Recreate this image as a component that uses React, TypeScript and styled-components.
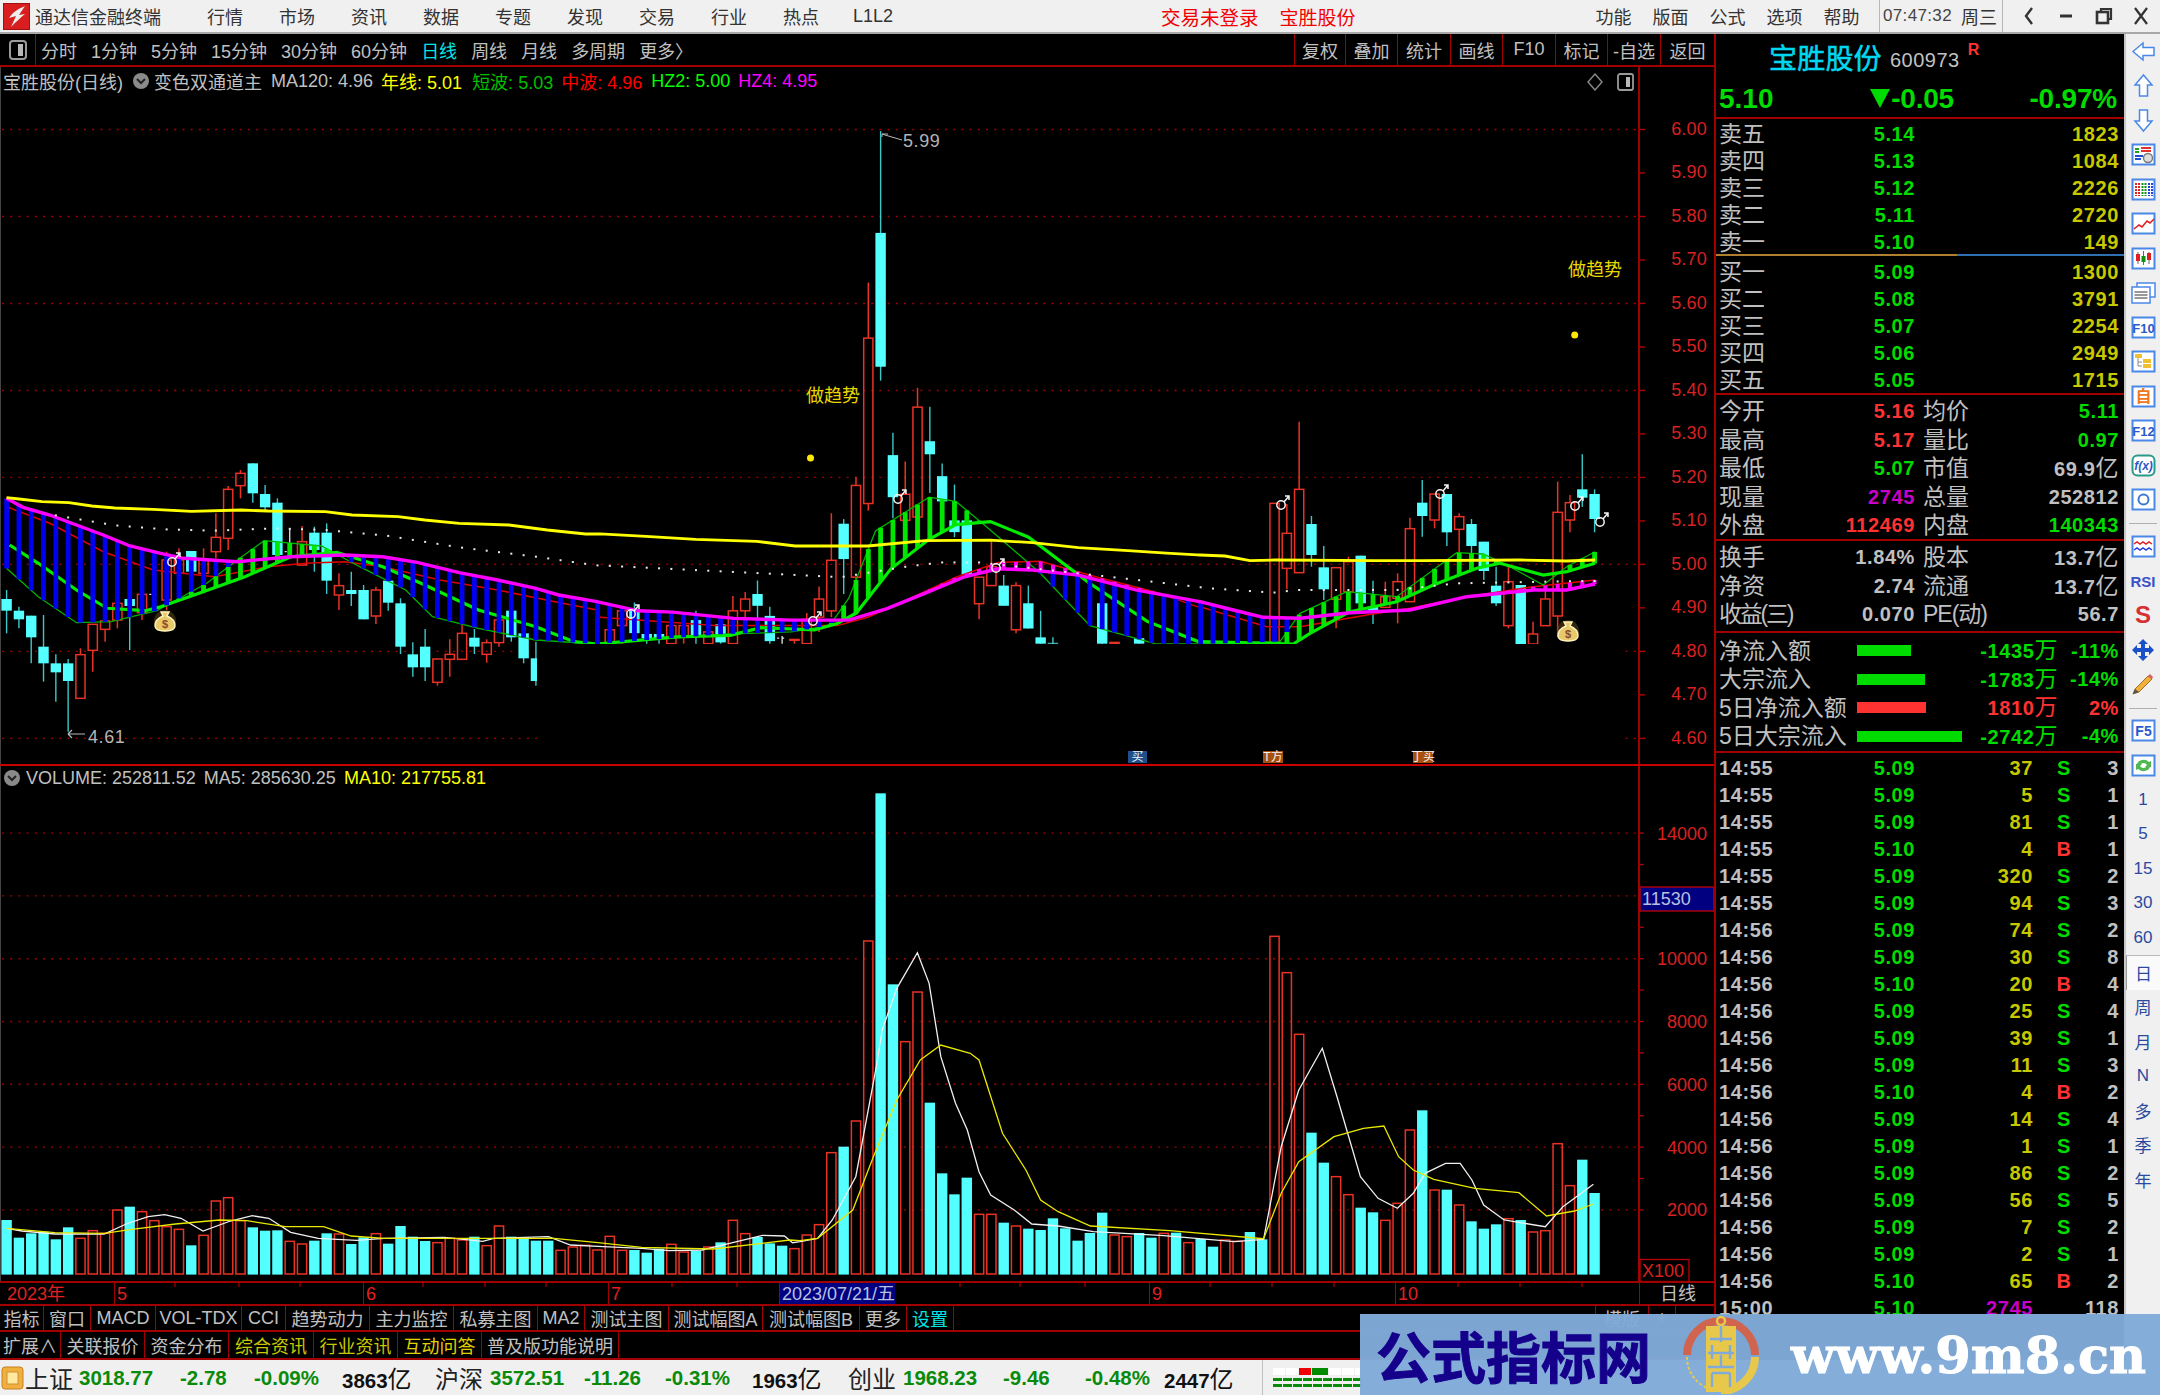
import React from 'react';
import styled, { createGlobalStyle } from 'styled-components';

const SANS = `"Liberation Sans","Noto Sans CJK SC",sans-serif`;
const LINE = '#a00000';
const GRAY = '#c0c0c0';
const GREEN = '#00dc00';
const YEL = '#c8c800';
const RED = '#ff3232';
const MAG = '#c800c8';
const CYAN_TXT = '#00e6e6';

const Global = createGlobalStyle`
  html, body { margin: 0; padding: 0; background: #000; }
  #root { width: 2160px; height: 1395px; overflow: hidden; }
  * { box-sizing: border-box; }
`;

const Page = styled.div`
  position: relative;
  width: 2160px;
  height: 1395px;
  display: flex;
  flex-direction: column;
  font-family: ${SANS};
  background: #000;
  overflow: hidden;
`;

/* ---------- title bar ---------- */
const TitleBar = styled.div`
  height: 34px;
  flex: none;
  display: flex;
  align-items: center;
  background: #f0f0f0;
  border-bottom: 2px solid #a8a8a8;
  color: #333;
  font-size: 18px;
`;
const AppName = styled.div`
  margin-left: 5px;
  width: 126px;
  margin-right: 28px;
  white-space: nowrap;
`;
const MenuCell = styled.div<{ $w: number }>`
  width: ${(p) => p.$w}px;
  text-align: center;
  white-space: nowrap;
`;
const Alert = styled.div<{ $ml: number; $size: number }>`
  margin-left: ${(p) => p.$ml}px;
  color: #f00000;
  font-size: ${(p) => p.$size}px;
  white-space: nowrap;
`;
const RightMenus = styled.div`
  margin-left: auto;
  display: flex;
  align-items: center;
  height: 100%;
`;
const Clock = styled.div`
  margin-left: 9px;
  width: 124px;
  height: 100%;
  border-left: 1px solid #b8b8b8;
  border-right: 1px solid #b8b8b8;
  display: flex;
  align-items: center;
  padding-left: 3px;
  font-size: 17px;
  letter-spacing: 0.35px;
  color: #444;
  white-space: nowrap;
`;
const ClockDay = styled.span`
  margin-left: 9px;
  font-size: 18px;
  letter-spacing: 0;
  color: #333;
`;
const WinButtons = styled.div`
  display: flex;
  padding-left: 7px;
  width: 157px;
`;
const WinBtn = styled.div`
  width: 37.5px;
  height: 24px;
  display: flex;
  align-items: center;
  justify-content: center;
`;

/* ---------- body ---------- */
const Body = styled.div`
  flex: none;
  height: 1326px;
  display: flex;
`;
const LeftCol = styled.div`
  width: 1714px;
  flex: none;
  display: flex;
  flex-direction: column;
`;
const Toolbar = styled.div`
  height: 33px;
  flex: none;
  display: flex;
  align-items: stretch;
  border-bottom: 2px solid ${LINE};
  color: ${GRAY};
  font-size: 18px;
`;
const ToolIconCell = styled.div`
  width: 36px;
  border-right: 1px solid ${LINE};
  display: flex;
  align-items: center;
  justify-content: center;
`;
const PeriodList = styled.div`
  display: flex;
  align-items: center;
  gap: 14px;
  padding-left: 5px;
`;
const Period = styled.span<{ $on?: boolean }>`
  color: ${(p) => (p.$on ? CYAN_TXT : GRAY)};
  white-space: nowrap;
`;
const ActionList = styled.div`
  margin-left: auto;
  display: flex;
`;
const Action = styled.div<{ $w: number }>`
  width: ${(p) => p.$w}px;
  border-left: 1px solid ${LINE};
  display: flex;
  align-items: center;
  justify-content: center;
  white-space: nowrap;
`;

const MainPane = styled.div`
  position: relative;
  height: 699px;
  flex: none;
  border-bottom: 2px solid #c80000;
`;
const VolPane = styled.div`
  position: relative;
  height: 517px;
  flex: none;
  border-bottom: 2px solid ${LINE};
`;
const ChartSvg = styled.svg`
  display: block;
  font-family: ${SANS};
`;
const Legend = styled.div<{ $top: number }>`
  position: absolute;
  left: 3px;
  top: ${(p) => p.$top}px;
  height: 22px;
  display: flex;
  align-items: center;
  font-size: 18px;
  color: ${GRAY};
  white-space: nowrap;
`;
const LegendTxt = styled.span<{ $c?: string; $ml?: number }>`
  color: ${(p) => p.$c || GRAY};
  margin-left: ${(p) => p.$ml ?? 0}px;
`;
const ChevronDot = styled.svg<{ $ml: number; $mr: number }>`
  margin: 0 ${(p) => p.$mr}px 0 ${(p) => p.$ml}px;
`;
const PaneIcons = styled.div`
  position: absolute;
  top: 6px;
  left: 1587px;
  display: flex;
  gap: 14px;
  align-items: center;
`;

const TimeAxis = styled.div`
  position: relative;
  height: 23px;
  flex: none;
  display: flex;
  border-bottom: 2px solid ${LINE};
  color: #e02020;
  font-size: 18px;
`;
const TimeSeg = styled.div<{ $w: number; $first?: boolean; $c?: string; $bg?: string; $center?: boolean }>`
  width: ${(p) => p.$w}px;
  flex: none;
  border-left: ${(p) => (p.$first ? 'none' : `1px solid ${LINE}`)};
  padding-left: ${(p) => (p.$first ? 7 : 2)}px;
  color: ${(p) => p.$c || '#e02020'};
  background: ${(p) => p.$bg || 'transparent'};
  text-align: ${(p) => (p.$center ? 'center' : 'left')};
  line-height: 22px;
  white-space: nowrap;
  overflow: hidden;
`;
const Ticks = styled.svg`
  position: absolute;
  left: 0;
  top: 0;
`;
const TabRow = styled.div<{ $h: number }>`
  height: ${(p) => p.$h}px;
  flex: none;
  display: flex;
  border-bottom: 2px solid ${LINE};
  font-size: 18px;
`;
const Tab = styled.div<{ $w: number; $c?: string; $grow?: boolean }>`
  width: ${(p) => p.$w}px;
  flex: none;
  border-right: 1px solid ${LINE};
  color: ${(p) => p.$c || GRAY};
  display: flex;
  align-items: center;
  justify-content: center;
  white-space: nowrap;
  overflow: hidden;
`;
const TabGap = styled.div<{ $w: number }>`
  width: ${(p) => p.$w}px;
  flex: none;
  border-right: 1px solid ${LINE};
`;

/* ---------- right panel ---------- */
const RightCol = styled.div`
  width: 410px;
  flex: none;
  border-left: 2px solid ${LINE};
  padding-left: 3px;
  padding-right: 5px;
  display: flex;
  flex-direction: column;
  overflow: hidden;
`;
const Section = styled.div<{ $h: number; $pt?: number; $line?: boolean }>`
  height: ${(p) => p.$h}px;
  flex: none;
  margin: 0 -5px 0 -3px;
  padding: ${(p) => p.$pt ?? 0}px 5px 0 3px;
  border-bottom: ${(p) => (p.$line === false ? 'none' : `2px solid ${LINE}`)};
`;
const NameRow = styled.div`
  height: 46px;
  display: flex;
  align-items: center;
  padding-left: 50px;
`;
const StockName = styled.span`
  color: #00d8f0;
  font-size: 28px;
  width: 121px;
  letter-spacing: 0.2px;
  white-space: nowrap;
  -webkit-text-stroke: 0.5px #00d8f0;
`;
const StockCode = styled.span`
  color: ${GRAY};
  font-size: 20px;
  letter-spacing: 0.5px;
  margin-top: 6px;
`;
const RBadge = styled.span`
  color: ${RED};
  font-size: 16px;
  font-weight: bold;
  margin-left: 8px;
  margin-top: -14px;
`;
const QuoteRow = styled.div`
  height: 37px;
  display: grid;
  grid-template-columns: 60px 175px 163px;
  align-items: center;
  color: ${GREEN};
  font-size: 28px;
  font-weight: bold;
  white-space: nowrap;
`;
const QuoteChange = styled.span`
  justify-self: end;
  display: flex;
  align-items: center;
  letter-spacing: -0.2px;
`;
const QuoteTri = styled.span`
  display: inline-block;
  width: 0;
  height: 0;
  margin-right: 1px;
  border-left: 10px solid transparent;
  border-right: 10px solid transparent;
  border-top: 19px solid ${GREEN};
`;
const Cell = styled.span<{ $c?: string; $big?: boolean; $left?: boolean; $center?: boolean; $pl?: number; $ls?: number }>`
  color: ${(p) => p.$c || GRAY};
  justify-self: ${(p) => (p.$center ? 'center' : p.$left ? 'start' : 'end')};
  font-size: ${(p) => (p.$big ? 23 : 20)}px;
  font-weight: ${(p) => (p.$big ? 400 : 700)};
  letter-spacing: ${(p) => (p.$ls !== undefined ? p.$ls : p.$big ? 0 : 0.6)}px;
  padding-left: ${(p) => p.$pl ?? 0}px;
  white-space: nowrap;
`;
const QRow = styled.div`
  height: 27px;
  line-height: 27px;
  display: grid;
  grid-template-columns: 60px 136px 204px;
`;
const SRow = styled.div`
  height: 28.5px;
  line-height: 28.5px;
  display: grid;
  grid-template-columns: 60px 136px 68px 136px;
`;
const FRow = styled.div`
  height: 28.5px;
  line-height: 28.5px;
  display: grid;
  grid-template-columns: 138px 110px 91px 61px;
  align-items: center;
`;
const FlowBarWrap = styled.div`
  height: 11px;
`;
const FlowBar = styled.div<{ $c: string; $w: number }>`
  height: 11px;
  width: ${(p) => p.$w}px;
  background: ${(p) => p.$c};
`;
const TRow = styled.div`
  height: 27px;
  line-height: 27px;
  display: grid;
  grid-template-columns: 60px 136px 118px 62px 24px;
`;
const MidRule = styled.div`
  flex: none;
  height: 2px;
  margin: 0 -5px 0 -3px;
  background: linear-gradient(to right, #b08030 0, #b08030 241px, #2f70b0 241px, #2f70b0 100%);
`;
const Wan = styled.span`
  font-size: 23px;
  font-weight: 400;
`;
const TradeList = styled.div`
  flex: none;
  padding-top: 2px;
`;

/* ---------- side bar ---------- */
const SideBar = styled.div`
  width: 36px;
  flex: none;
  background: #f0f0f0;
  border-left: 2px solid #c8c8c8;
  display: flex;
  flex-direction: column;
  align-items: center;
`;
const SideCell = styled.div<{ $on?: boolean }>`
  width: 100%;
  height: 34.5px;
  flex: none;
  display: flex;
  align-items: center;
  justify-content: center;
  color: #2a4aa0;
  font-size: 17px;
  background: ${(p) => (p.$on ? '#fafafa' : 'transparent')};
  border-left: ${(p) => (p.$on ? '1px solid #999' : 'none')};
  border-top: ${(p) => (p.$on ? '1px solid #bbb' : 'none')};
`;
const SideRule = styled.div`
  width: 28px;
  height: 0;
  border-top: 1px solid #b0b0b0;
  margin: 6px 0 5px;
  flex: none;
`;

/* ---------- status bar ---------- */
const StatusBar = styled.div`
  height: 35px;
  flex: none;
  display: flex;
  align-items: center;
  background: #f0f0f0;
  padding-left: 1px;
  white-space: nowrap;
`;
const StatusItem = styled.div<{ $w: number; $kind: 'label' | 'num' | 'amt' }>`
  width: ${(p) => p.$w}px;
  flex: none;
  font-size: ${(p) => (p.$kind === 'label' ? 24 : 20.5)}px;
  color: ${(p) => (p.$kind === 'num' ? '#0a8a0a' : p.$kind === 'amt' ? '#111' : '#222')};
  font-weight: ${(p) => (p.$kind === 'label' ? 400 : 700)};
`;
const Yi = styled.span`
  font-size: 24px;
  font-weight: 400;
`;
const StatusSep = styled.div`
  width: 1px;
  height: 100%;
  background: #c0c0c0;
  margin-left: 27px;
`;
const Blocks = styled.div`
  margin-left: 10px;
  display: flex;
  flex-direction: column;
  gap: 3px;
`;
const BlockRow = styled.div`
  display: flex;
  gap: 1px;
`;
const Block = styled.div<{ $c: string; $w: number; $h: number }>`
  width: ${(p) => p.$w}px;
  height: ${(p) => p.$h}px;
  background: ${(p) => p.$c};
`;

/* ---------- watermark ---------- */
const Watermark = styled.div`
  position: absolute;
  right: 0;
  bottom: 0;
  width: 800px;
  height: 81px;
  background: rgba(128, 170, 217, 0.97);
  display: flex;
  align-items: center;
  padding-left: 16px;
`;
const WmTitle = styled.div`
  color: #15008c;
  font-family: "Noto Sans CJK SC", sans-serif;
  font-weight: 700;
  font-size: 55px;
  line-height: 81px;
  width: 277px;
  white-space: nowrap;
  -webkit-text-stroke: 1px #15008c;
`;
const WmLogo = styled.svg`
  margin-left: 29px;
  flex: none;
`;
const WmUrl = styled.div`
  margin-left: 31px;
  color: #fff;
  font-family: "DejaVu Serif", serif;
  font-weight: 700;
  font-size: 51px;
  white-space: nowrap;
  -webkit-text-stroke: 1px #fff;
`;

/* ---------- chart data ---------- */
type Pt = [number, number];
const pairs = (a: number[], fx: (x: number) => number, fy: (y: number) => number): Pt[] => {
  const r: Pt[] = [];
  for (let i = 0; i < a.length; i += 2) r.push([fx(a[i]), fy(a[i + 1])]);
  return r;
};
const fx7 = (x: number) => x / 2.613;
const fy7 = (y: number) => 420 + y / 3;
const fx8 = (x: number) => 600 + x / 2.613;
const fy8 = (y: number) => 110 + y / 2.376;
const fx9 = (x: number) => 1200 + x / 3;
const fy9 = (y: number) => 400 + y / 3;
const z7 = (a: number[]) => pairs(a, fx7, fy7);
const z8 = (a: number[]) => pairs(a, fx8, fy8);
const z9 = (a: number[]) => pairs(a, fx9, fy9);
const z10 = (a: number[]) => pairs(a, (x) => x / 1.823, (y) => 1100 + y / 3);
const z11 = (a: number[]) => pairs(a, (x) => 800 + x / 1.704, (y) => 780 + y / 3);

const xAt = (i: number) => 6.6 + 12.31 * i;
const pts = (l: Pt[]) => l.map((p) => `${p[0].toFixed(1)},${p[1].toFixed(1)}`).join(' ');
const interp = (l: Pt[], x: number) => {
  if (x <= l[0][0]) return l[0][1];
  for (let i = 1; i < l.length; i++) {
    if (x <= l[i][0]) {
      const t = (x - l[i - 1][0]) / (l[i][0] - l[i - 1][0]);
      return l[i - 1][1] + t * (l[i][1] - l[i - 1][1]);
    }
  }
  return l[l.length - 1][1];
};

const yellowL: Pt[] = [
  ...z7([17,233,50,237,110,245,180,248,240,258,300,264,400,268,500,274,630,270,700,273,850,275,920,285,1040,290,1110,300,1200,310,1330,315,1430,330,1530,342]),
  ...z8([0,1007,120,1013,250,1020,410,1025,510,1036,700,1036,850,1023,1020,1022,1130,1028,1250,1040,1380,1047,1480,1053,1560,1057]),
  ...z9([0,465,75,468,150,482,225,480,520,482,670,482,960,480,1100,483,1185,480]),
];
const magentaL: Pt[] = [
  ...z7([17,235,60,262,130,285,200,315,270,345,340,378,420,400,480,415,620,425,760,410,900,405,1000,410,1090,427,1200,458,1300,480,1400,505,1460,525,1560,545]),
  ...z8([0,1170,100,1190,190,1193,350,1208,500,1212,650,1212,750,1185,850,1148,950,1110,1040,1090,1130,1093,1250,1105,1400,1140,1560,1167]),
  ...z9([0,605,100,630,190,652,300,655,450,638,630,630,800,590,1000,570,1100,570,1185,552]),
];
const redL: Pt[] = [
  ...z7([17,260,130,310,270,395,400,450,560,470,700,440,800,430,900,425,1000,440,1150,480,1300,510,1450,545,1560,570]),
  ...z8([0,1205,300,1225,620,1225,700,1205,800,1165,930,1110,1040,1075,1150,1072,1300,1110,1450,1145,1560,1180]),
  ...z9([0,620,100,650,200,680,300,680,500,645,630,625,800,590,1000,560,1185,540]),
];
const thickG: Pt[] = [
  ...z7([25,375,100,430,200,510,280,565,380,572,420,560,520,520,640,470,760,410,880,397,1000,440,1100,490,1250,570,1400,620,1500,665,1560,672]),
  ...z8([40,1265,200,1252,340,1248,420,1230,560,1235,620,1220,670,1195,760,1090,860,1020,930,985,1020,978,1120,1015,1280,1125,1430,1215,1560,1262]),
  ...z9([0,725,280,732,330,700,450,635,590,605,700,555,830,505,900,490,1030,525,1100,515,1185,490]),
];
const thinG: Pt[] = [
  ...z7([17,445,100,530,200,608,290,605,410,572,540,490,620,420,690,362,840,378,940,440,1060,510,1130,590,1250,625,1400,660,1560,672]),
  ...z8([40,1265,330,1245,500,1240,600,1225,650,1160,720,1000,860,920,930,930,1010,990,1150,1100,1280,1225,1450,1268]),
  ...z9([0,732,240,725,300,640,440,575,590,590,770,458,850,462,920,495,1030,555,1100,500,1185,455]),
];
const dotL: Pt[] = [
  ...z7([140,285,300,316,430,328,560,332,720,325,850,330,1010,347,1200,382,1400,410,1558,436]),
  ...z8([20,1083,630,1110,800,1085,890,1075,990,1075,1340,1110,1560,1133]),
  ...z9([30,565,220,578,290,570,590,570,770,550,1150,543]),
];

/* [index, isRed, bodyTop, bodyBottom, wickTop, wickBottom] in crop units */
type C = [number, 0 | 1 | 2, number, number, number, number];
const c7: C[] = [
  [0,0,537,572,510,640],[1,0,572,598,560,625],[2,0,587,652,587,730],[3,0,680,730,585,785],[4,0,730,757,703,845],
  [5,0,730,783,717,935],[6,1,704,835,685,835],[7,1,613,691,613,755],[8,1,603,628,550,665],[9,1,550,600,550,625],
  [10,0,537,558,537,690],[11,1,523,578,523,600],[12,2,523,525,523,525],[13,1,420,540,395,570],[14,1,420,460,385,460],
  [15,0,393,455,393,470],[16,1,420,460,385,470],[17,1,352,395,280,415],[18,1,208,355,198,390],[19,1,160,197,150,235],
  [20,0,130,220,130,248],[21,0,222,262,195,270],[22,0,248,405,235,430],[23,2,395,397,325,400],[24,1,365,435,318,435],
  [25,0,338,390,320,455],[26,0,338,482,310,522],[27,1,497,525,460,570],[28,0,510,522,455,558],[29,0,510,598,495,598],
  [30,1,510,588,500,612],[31,0,482,548,475,572],[32,0,550,680,535,702],[33,0,703,742,667,770],[34,0,680,742,627,783],
  [35,1,717,787,717,797],[36,1,703,718,658,770],[37,1,640,718,612,718],[38,0,653,680,627,702],[39,1,668,703,658,728],
  [40,1,600,668,590,680],[41,0,572,652,572,665],[42,0,640,715,640,730],[43,0,715,783,665,797],
];
const c8: C[] = [
  [49,1,1235,1268,1235,1268],[50,1,1190,1225,1190,1268],[51,0,1185,1243,1170,1243],[52,0,1245,1255,1245,1268],[53,0,1245,1255,1245,1268],
  [54,1,1225,1268,1225,1268],[55,1,1225,1250,1225,1268],[56,0,1212,1250,1190,1268],[57,1,1240,1268,1240,1268],[58,0,1222,1265,1222,1268],
  [59,1,1190,1268,1155,1268],[60,1,1162,1190,1145,1205],[61,0,1150,1178,1118,1210],[62,0,1202,1262,1180,1268],[63,2,1255,1257,1250,1268],
  [64,1,1258,1260,1258,1268],[65,1,1210,1268,1195,1268],[66,1,1162,1205,1132,1240],[67,1,1070,1190,958,1205],[68,0,983,1067,972,1150],
  [69,1,892,1110,872,1125],[70,1,542,935,410,952],[71,0,292,610,50,643],[72,0,820,920,767,970],[73,1,913,975,835,975],
  [74,1,706,967,660,967],[75,0,787,818,705,910],[76,0,870,930,840,930],[77,0,975,1003,890,1015],[78,0,975,1105,960,1105],
  [79,1,1110,1173,1110,1210],[80,1,1085,1130,1025,1130],[81,0,1130,1178,1105,1178],[82,1,1130,1235,1122,1243],[83,0,1172,1232,1130,1232],
  [84,0,1253,1268,1190,1268],[85,0,1266,1268,1253,1268],[89,0,1172,1268,1172,1268],[90,1,1265,1268,1265,1268],[92,0,1255,1268,1255,1268],
];
const c9: C[] = [
  [103,1,310,732,310,732],[104,1,400,505,312,568],[105,1,268,518,65,518],[106,0,372,465,348,500],[107,0,502,568,438,600],
  [108,1,503,598,503,685],[109,1,485,575,470,575],[110,0,467,610,467,620],[111,0,620,632,542,672],[112,1,590,622,545,622],
  [113,1,545,595,520,670],[114,1,386,605,353,605],[115,0,308,348,240,410],[116,1,282,360,282,385],[117,0,282,397,282,438],
  [118,1,350,388,340,460],[119,0,372,438,357,500],[120,0,425,513,425,540],[121,0,557,610,500,618],[122,1,545,677,500,685],
  [123,0,555,732,555,732],[124,1,702,732,665,732],[125,1,597,677,567,677],[126,1,337,648,245,710],[127,1,308,360,285,397],
  [128,0,268,293,163,320],[129,0,282,357,268,397],
];
const candles: C[] = [
  ...c7.map((c): C => [c[0], c[1], fy7(c[2]), fy7(c[3]), fy7(c[4]), fy7(c[5])]),
  ...c8.map((c): C => [c[0], c[1], fy8(c[2]), fy8(c[3]), fy8(c[4]), fy8(c[5])]),
  ...c9.map((c): C => [c[0], c[1], fy9(c[2]), fy9(c[3]), fy9(c[4]), fy9(c[5])]),
];

const priceY = (p: number) => 129.5 + (6 - p) * 434.9;
const priceLabels = [6.0,5.9,5.8,5.7,5.6,5.5,5.4,5.3,5.2,5.1,5.0,4.9,4.8,4.7,4.6];
const priceGrid = [6.0,5.8,5.6,5.4,5.2,5.0,4.8,4.6];

const CY = '#54ffff';
const CR = '#e83224';

const Candle: React.FC<{ c: C }> = ({ c }) => {
  const [i, kind, t, b, hi, lo] = c;
  const x = xAt(i);
  if (kind === 2) {
    return (
      <g stroke="#e8e8e8" strokeWidth={1.3}>
        <line x1={x} x2={x} y1={hi} y2={lo} />
        <line x1={x - 5} x2={x + 5} y1={t} y2={t} strokeDasharray="2 3" />
      </g>
    );
  }
  if (kind === 1) {
    return (
      <g stroke={CR} strokeWidth={1.5} fill="none">
        <line x1={x} x2={x} y1={hi} y2={t} />
        <line x1={x} x2={x} y1={b} y2={lo} />
        <rect x={x - 4.6} y={t} width={9.2} height={b - t} />
      </g>
    );
  }
  return (
    <g>
      <line x1={x} x2={x} y1={hi} y2={lo} stroke="#3cc8c8" strokeWidth={1.4} />
      <rect x={x - 5.2} y={t} width={10.4} height={b - t} fill={CY} />
    </g>
  );
};

const Male: React.FC<{ x: number; y: number }> = ({ x, y }) => (
  <g stroke="#f4f4f4" strokeWidth={1.5} fill="none">
    <circle cx={x} cy={y + 2} r={4.2} />
    <path d={`M${x + 3} ${y - 1}L${x + 8} ${y - 7}M${x + 4} ${y - 7}h4v4`} />
  </g>
);

const Bag: React.FC<{ x: number; y: number }> = ({ x, y }) => (
  <g>
    <circle cx={x} cy={y} r={11} fill="#5a4a18" opacity={0.55} />
    <path
      d={`M${x - 4} ${y - 9}h8l-2 4c5 2 8 6 8 10 0 3-3 5-10 5s-10-2-10-5c0-4 3-8 8-10z`}
      fill="#e8c868"
      stroke="#fff4c0"
      strokeWidth={1.4}
    />
    <text x={x} y={y + 7} textAnchor="middle" fontSize={11} fontWeight={700} fill="#8a4a30">$</text>
  </g>
);

const Tag: React.FC<{ x: number; w: number; bg: string; t: string }> = ({ x, w, bg, t }) => (
  <g>
    <rect x={x} y={751} width={w} height={12} fill={bg} />
    <text x={x + w / 2} y={761} textAnchor="middle" fontSize={12} fill="#f4f4f4">{t}</text>
  </g>
);

const MainChart: React.FC = () => {
  const bars = Array.from({ length: 130 }, (_, i) => i);
  return (
    <ChartSvg width={1714} height={697} viewBox="0 67 1714 697">
      <rect x={0} y={67} width={1714} height={697} fill="#000" />
      <line x1={0.5} x2={0.5} y1={67} y2={764} stroke="#444" />
      {priceGrid.map((p) => (
        <line key={p} x1={2} x2={1638} y1={priceY(p)} y2={priceY(p)} stroke="#a00000" strokeWidth={1.4} strokeDasharray="2 6.2" />
      ))}
      {candles.map((c) => (
        <Candle key={c[0]} c={c} />
      ))}
      <polyline points={pts(redL)} fill="none" stroke="#e00000" strokeWidth={1.5} />
      <polyline points={pts(thinG)} fill="none" stroke="#00b400" strokeWidth={1.3} />
      <polyline points={pts(thickG)} fill="none" stroke="#00ec00" strokeWidth={3.2} />
      {bars.map((i) => {
        const x = xAt(i);
        const m = interp(magentaL, x);
        const th = interp(thinG, x);
        const tk = interp(thickG, x);
        const r = interp(redL, x);
        return (
          <g key={i}>
            {th > m + 2 && <rect x={x - 2.4} y={m} width={4.8} height={th - m} fill="#0000f0" />}
            {th < tk - 1 && <rect x={x - 2.4} y={th} width={4.8} height={tk - th} fill="#00e600" />}
            {r < m - 1 && <rect x={x - 2} y={r} width={4} height={m - r} fill="#ff00ff" />}
          </g>
        );
      })}
      <polyline points={pts(magentaL)} fill="none" stroke="#ff00ff" strokeWidth={3.4} />
      <polyline points={pts(yellowL)} fill="none" stroke="#ffff00" strokeWidth={2.8} />
      {bars.filter((i) => i >= 4).map((i) => (
        <rect key={i} x={xAt(i) - 1} y={interp(dotL, xAt(i)) - 1} width={2} height={2} fill="#e8e8e8" />
      ))}
      <rect x={537} y={644} width={1083} height={104} fill="#000" />
      <Tag x={1128} w={19} bg="#1f4f8a" t="买" />
      <Tag x={1263} w={20} bg="#a8500f" t="T方" />
      <Tag x={1413} w={20} bg="#a8500f" t="丁买" />
      <Bag x={165} y={621} />
      <Bag x={1568} y={631} />
      {[[172,560],[631,612],[813,619],[898,497],[996,566],[1281,503],[1440,492],[1575,504],[1600,520]].map(([x, y]) => (
        <Male key={x} x={x} y={y} />
      ))}
      <path d="M882 134l3 1 17 5M882 134v3M882 134h6" stroke="#b8b8b8" strokeWidth={1} fill="none" />
      <text x={903} y={147} fontSize={18} fill="#b4b4b4" letterSpacing={0.6}>5.99</text>
      <path d="M68 734h17M68 734l4-4M68 734l4 4" stroke="#b8b8b8" strokeWidth={1.2} fill="none" />
      <text x={88} y={743} fontSize={18} fill="#b4b4b4" letterSpacing={0.6}>4.61</text>
      <text x={806} y={402} fontSize={18} fill="#e8d800">做趋势</text>
      <text x={1568} y={276} fontSize={18} fill="#e8d800">做趋势</text>
      <ellipse cx={810.5} cy={458} rx={3.5} ry={3.5} fill="#ffe800" />
      <ellipse cx={1574.7} cy={335} rx={3.5} ry={3.5} fill="#ffe800" />
      <line x1={1639} x2={1639} y1={67} y2={764} stroke="#a00000" strokeWidth={2} />
      {priceLabels.map((p) => (
        <g key={p}>
          <line x1={1640} x2={1645} y1={priceY(p)} y2={priceY(p)} stroke="#b00000" strokeWidth={1.4} />
          <text x={1707} y={priceY(p) + 5.5} textAnchor="end" fontSize={18} fill="#d82020" letterSpacing={0.2}>{p.toFixed(2)}</text>
        </g>
      ))}
    </ChartSvg>
  );
};

const volA = [360,413,400,395,418,382,-415,-392,-400,-330,320,-335,-362,-380,-388,436,-406,-303,-293,-362,382,392,391,-424,-432,422,400,-402,432,412,-401,431,378,410,423,-428,-415,-420,410,-437,-378,410,412,422,422,-451,-441,-436,-450,-409,-451,450,458,446,-433,-456,452,-441,427,-361,-401,411,430,437,-446];
const volB = [-1365,-1334,-1118,1100,-1023,-483,40,613,-785,-636,968,1180,1243,1193,-1303,-1303,1328,-1338,1346,1350,1315,1345,1382,1359,1298,-1365,-1370,1359,1373,-1360,1358,-1388,1377,1400,-1380,-1384,1356,1378,-469,-578,-763,1058,1148,-1190,-1244,1283,1297,-1321,-1270,-1050,991,-1230,1229,-1275,1324,1346,1333,-1316,1320,-1356,-1352,-1091,-1217,1139,1239];
const vols: { top: number; red: boolean }[] = [
  ...volA.map((v) => ({ top: 1100 + Math.abs(v) / 3, red: v < 0 })),
  ...volB.map((v) => ({ top: 780 + Math.abs(v) / 3, red: v < 0 })),
];
const ma5: Pt[] = [
  ...z10([12,385,40,393,100,402,190,402,230,372,270,350,300,344,330,355,370,393,420,363,460,347,490,355,530,397,580,415,650,421,700,415,810,412,880,424,900,415,1000,410,1040,435,1100,440,1170,445,1220,452,1280,450,1330,430,1390,406,1430,408,1445,428]),
  ...z11([0,1385,30,1375,55,1320,95,1190,130,860,140,750,165,625,200,518,220,610,240,830,265,970,285,1050,305,1175,325,1245,365,1290,395,1332,440,1338,500,1355,620,1367,740,1385,790,1378,820,1100,850,930,890,805,915,950,955,1190,985,1255,1018,1285,1045,1240,1065,1180,1100,1150,1125,1150,1145,1200,1165,1275,1200,1320,1270,1340,1300,1280,1352,1213]),
];
const ma10: Pt[] = [
  ...z10([12,385,100,398,190,400,240,388,320,372,400,360,450,362,520,380,590,380,640,408,700,415,1010,415,1090,428,1170,442,1300,447,1400,428,1440,420]),
  ...z11([0,1382,30,1375,90,1290,125,1130,165,960,205,840,240,795,290,820,305,840,345,1060,385,1170,410,1260,440,1295,495,1338,630,1352,790,1376,820,1240,850,1145,910,1070,960,1045,995,1038,1020,1130,1045,1170,1080,1198,1150,1225,1225,1238,1272,1308,1320,1293,1352,1272]),
];
const volY = (v: number) => 1272.7 - (v / 2000) * 62.8;
const volGrid = [14000, 12000, 10000, 8000, 6000, 4000, 2000];
const volLabels = [14000, 10000, 8000, 6000, 4000, 2000];

const VolumeChart: React.FC = () => (
  <ChartSvg width={1714} height={515} viewBox="0 766 1714 515">
    <rect x={0} y={766} width={1714} height={515} fill="#000" />
    <line x1={0.5} x2={0.5} y1={766} y2={1281} stroke="#444" />
    {volGrid.map((v) => (
      <line key={v} x1={2} x2={1638} y1={volY(v)} y2={volY(v)} stroke="#a00000" strokeWidth={1.4} strokeDasharray="2 6.2" />
    ))}
    {vols.map((b, i) =>
      b.red ? (
        <rect key={i} x={xAt(i) - 4.6} y={b.top} width={9.2} height={1274 - b.top} fill="none" stroke={CR} strokeWidth={1.5} />
      ) : (
        <rect key={i} x={xAt(i) - 5.2} y={b.top} width={10.4} height={1274.6 - b.top} fill={CY} />
      )
    )}
    <polyline points={pts(ma5)} fill="none" stroke="#f0f0f0" strokeWidth={1.3} />
    <polyline points={pts(ma10)} fill="none" stroke="#e8e800" strokeWidth={1.3} />
    <line x1={1639} x2={1639} y1={766} y2={1281} stroke="#a00000" strokeWidth={2} />
    {volLabels.map((v) => (
      <text key={v} x={1707} y={volY(v) + 6.5} textAnchor="end" fontSize={18} fill="#d82020">{v}</text>
    ))}
    {[14000, 13000, 12000, 11000, 10000, 9000, 8000, 7000, 6000, 5000, 4000, 3000, 2000].map((v) => (
      <line key={v} x1={1640} x2={1644} y1={volY(v)} y2={volY(v)} stroke="#b00000" strokeWidth={1.3} />
    ))}
    <rect x={1640} y={887} width={74} height={24} fill="#000080" stroke="#c00000" strokeWidth={1.3} />
    <text x={1642} y={905} fontSize={18} fill="#b8c0e0">11530</text>
    <rect x={1640} y={1259.5} width={49} height={22} fill="#000" stroke="#c00000" strokeWidth={1.3} />
    <text x={1642} y={1277} fontSize={18} fill="#d82020">X100</text>
  </ChartSvg>
);

/* ---------- side icons ---------- */
const B = '#4a88e8';
const Frame: React.FC<{ children?: React.ReactNode }> = ({ children }) => (
  <svg width={25} height={23} viewBox="0 0 25 23">
    <rect x={1.5} y={1.5} width={22} height={20} fill="#fff" stroke={B} strokeWidth={2} />
    {children}
  </svg>
);
const ArrowLeft = () => (
  <svg width={25} height={23} viewBox="0 0 25 23"><path d="M2 11.5L12 3v4.5h11v8H12V20z" fill="#fff" stroke={B} strokeWidth={1.5} /></svg>
);
const ArrowUp = () => (
  <svg width={23} height={25} viewBox="0 0 23 25"><path d="M11.5 2L20 12h-4.5v11h-8V12H3z" fill="#fff" stroke={B} strokeWidth={1.5} /></svg>
);
const ArrowDown = () => (
  <svg width={23} height={25} viewBox="0 0 23 25"><path d="M11.5 23L20 13h-4.5V2h-8v11H3z" fill="#fff" stroke={B} strokeWidth={1.5} /></svg>
);
const FrameText: React.FC<{ t: string; c?: string; s?: number }> = ({ t, c = '#2a5ac8', s = 14 }) => (
  <Frame>
    <text x={12.5} y={16.5} textAnchor="middle" fontSize={s} fontWeight={700} fontFamily={SANS} fill={c}>{t}</text>
  </Frame>
);
const sideIcons: React.ReactNode[] = [
  <ArrowLeft key="a" />,
  <ArrowUp key="b" />,
  <ArrowDown key="c" />,
  <Frame key="d">
    <path d="M4 6h4M4 9h4" stroke="#20a020" strokeWidth={2} /><path d="M10 5h10M10 8h10" stroke="#e03030" strokeWidth={2} /><path d="M4 13h8M4 16h6" stroke="#2050d0" strokeWidth={2} />
    <circle cx={17} cy={15} r={4.5} fill="#ddd" stroke="#777" strokeWidth={1.4} />
  </Frame>,
  <Frame key="e">
    <path d="M5 5v13M8 5v13" stroke="#e02020" strokeWidth={2} strokeDasharray="2 1" /><path d="M11.5 5v13M14.5 5v13" stroke="#109010" strokeWidth={2} strokeDasharray="2 1" /><path d="M18 5v13M21 5v13" stroke="#2040e0" strokeWidth={2} strokeDasharray="2 1" />
  </Frame>,
  <Frame key="f"><path d="M3 17l5-4 3 2 5-6 3 2 4-4" fill="none" stroke="#e02020" strokeWidth={1.6} /></Frame>,
  <Frame key="g">
    <path d="M7 5v12M12.5 4v14M18 5v12" stroke="#666" strokeWidth={1} /><rect x={5} y={7} width={4} height={7} fill="#e02020" /><rect x={10.5} y={9} width={4} height={6} fill="#109010" /><rect x={16} y={6} width={4} height={7} fill="#e02020" />
  </Frame>,
  <svg key="h" width={25} height={22} viewBox="0 0 25 22"><rect x={6} y={1} width={18} height={14} fill="#fff" stroke={B} strokeWidth={1.5} /><rect x={1} y={5} width={18} height={16} fill="#fff" stroke={B} strokeWidth={1.5} /><path d="M3.5 10h13M3.5 13h13M3.5 16h13" stroke="#777" strokeWidth={1.5} /></svg>,
  <FrameText key="i" t="F10" s={13} />,
  <Frame key="j">
    <rect x={4} y={4} width={7} height={4} fill="#f0c030" /><path d="M7 8v8h4M7 12h4" fill="none" stroke="#888" /><rect x={12} y={9} width={8} height={4} fill="#f0c030" /><rect x={12} y={14} width={8} height={4} fill="#f0c030" />
  </Frame>,
  <FrameText key="k" t="自" c="#f07820" s={16} />,
  <FrameText key="l" t="F12" s={13} />,
  <svg key="m" width={25} height={23} viewBox="0 0 25 23"><rect x={1.5} y={1.5} width={22} height={20} rx={5} fill="#fff" stroke="#2a9a8a" strokeWidth={2} /><text x={12.5} y={16} textAnchor="middle" fontSize={12} fontStyle="italic" fontWeight={700} fontFamily={SANS} fill="#2a5ac8">f(x)</text></svg>,
  <Frame key="n"><circle cx={12.5} cy={11.5} r={5} fill="none" stroke="#3a7ad0" strokeWidth={2} /></Frame>,
];
const sideIcons2: React.ReactNode[] = [
  <Frame key="a"><path d="M3 9l3-2 3 2 3-2 3 2 3-2 3 2" fill="none" stroke="#e02020" strokeWidth={1.5} /><path d="M3 15l3-2 3 2 3-2 3 2 3-2 3 2" fill="none" stroke="#2040e0" strokeWidth={1.5} /></Frame>,
  <svg key="b" width={26} height={20} viewBox="0 0 26 20"><text x={13} y={16} textAnchor="middle" fontSize={15} fontWeight={700} fontFamily={SANS} fill="#3a50c8">RSI</text></svg>,
  <svg key="c" width={24} height={28} viewBox="0 0 24 28"><text x={12} y={22} textAnchor="middle" fontSize={24} fontWeight={700} fontFamily={SANS} fill="#d83030">S</text></svg>,
  <svg key="d" width={24} height={24} viewBox="0 0 24 24"><path d="M12 1l5 5h-3v4h4V7l5 5-5 5v-3h-4v4h3l-5 5-5-5h3v-4H6v3l-5-5 5-5v3h4V6H7z" fill="#1a50c8" /></svg>,
  <svg key="e" width={24} height={24} viewBox="0 0 24 24"><path d="M4 17L17 4l4 3L8 20l-6 2z" fill="#f0b040" stroke="#a87020" strokeWidth={1} /><path d="M17 4l4 3 1-2-3-3z" fill="#d86060" /><path d="M2 22l2-5 4 3z" fill="#555" /></svg>,
];
const sideIcons3: React.ReactNode[] = [
  <FrameText key="a" t="F5" s={14} />,
  <Frame key="b"><path d="M6 10a7 6 0 0 1 12-2l2-1v6h-6l2-2a4 4 0 0 0-7 0zM19 13a7 6 0 0 1-12 2l-2 1v-6h6l-2 2a4 4 0 0 0 7 0z" fill="#50b850" /></Frame>,
];
const sideLabels = ['1', '5', '15', '30', '60', '日', '周', '月', 'N', '多', '季', '年'];

/* ---------- data ---------- */
const sell = [['卖五','5.14','1823'],['卖四','5.13','1084'],['卖三','5.12','2226'],['卖二','5.11','2720'],['卖一','5.10','149']];
const buy = [['买一','5.09','1300'],['买二','5.08','3791'],['买三','5.07','2254'],['买四','5.06','2949'],['买五','5.05','1715']];
const stats: [string, string, string, string, string, string][] = [
  ['今开','5.16',RED,'均价','5.11',GREEN],
  ['最高','5.17',RED,'量比','0.97',GREEN],
  ['最低','5.07',GREEN,'市值','69.9亿',GRAY],
  ['现量','2745',MAG,'总量','252812',GRAY],
  ['外盘','112469',RED,'内盘','140343',GREEN],
];
const stats2 = [['换手','1.84%','股本','13.7亿'],['净资','2.74','流通','13.7亿'],['收益(三)','0.070','PE(动)','56.7']];
const flows: [string, number, string, string, string][] = [
  ['净流入额',54,GREEN,'-1435','-11%'],
  ['大宗流入',68,GREEN,'-1783','-14%'],
  ['5日净流入额',69,RED,'1810','2%'],
  ['5日大宗流入',105,GREEN,'-2742','-4%'],
];
const trades = `14:55 5.09 37 S 3|14:55 5.09 5 S 1|14:55 5.09 81 S 1|14:55 5.10 4 B 1|14:55 5.09 320 S 2|14:55 5.09 94 S 3|14:56 5.09 74 S 2|14:56 5.09 30 S 8|14:56 5.10 20 B 4|14:56 5.09 25 S 4|14:56 5.09 39 S 1|14:56 5.09 11 S 3|14:56 5.10 4 B 2|14:56 5.09 14 S 4|14:56 5.09 1 S 1|14:56 5.09 86 S 2|14:56 5.09 56 S 5|14:56 5.09 7 S 2|14:56 5.09 2 S 1|14:56 5.10 65 B 2|15:00 5.10 2745 - 118`
  .split('|')
  .map((r) => r.split(' '));

const splitYi = (s: string) => (s.endsWith('亿') ? <>{s.slice(0, -1)}<Wan>亿</Wan></> : s);

const periods = ['分时','1分钟','5分钟','15分钟','30分钟','60分钟','日线','周线','月线','多周期','更多〉'];
const actions: [string, number][] = [['复权',51],['叠加',52],['统计',53],['画线',52],['F10',53],['标记',52],['-自选',53],['返回',54]];
const tabs1: [string, number, string?][] = [
  ['指标',44],['窗口',47],['MACD',65],['VOL-TDX',86],['CCI',44],['趋势动力',84],['主力监控',84],['私募主图',84],['MA2',47],['测试主图',84],['测试幅图A',94],['测试幅图B',97],['更多',47],['设置',47,CYAN_TXT],
];
const tabs2: [string, number, string?][] = [
  ['扩展∧',61],['关联报价',84],['资金分布',84],['综合资讯',85,YEL],['行业资讯',84,YEL],['互动问答',84,'#e0d000'],['普及版功能说明',137],
];
const statusItems: [string, number, 'label' | 'num' | 'amt'][] = [
  ['上证',54,'label'],['3018.77',101,'num'],['-2.78',74,'num'],['-0.09%',88,'num'],['3863亿',93,'amt'],
  ['沪深',55,'label'],['3572.51',94,'num'],['-11.26',81,'num'],['-0.31%',87,'num'],['1963亿',96,'amt'],
  ['创业',55,'label'],['1968.23',100,'num'],['-9.46',82,'num'],['-0.48%',79,'num'],['2447亿',71,'amt'],
];

const App: React.FC = () => (
  <Page>
    <Global />
    <TitleBar>
      <svg width={27} height={27} viewBox="0 0 27 27" style={{ marginLeft: 3, flex: 'none' }}>
        <rect x={0.5} y={0.5} width={26} height={26} fill="#d81e1e" stroke="#a01010" />
        <path d="M22 3C15 6 10 9 6 15l7-2-5 11c6-6 10-10 14-13l-6 1c2-3 4-6 6-9z" fill="#eee" />
      </svg>
      <AppName>通达信金融终端</AppName>
      {['行情','市场','资讯','数据','专题','发现','交易','行业','热点','L1L2'].map((t) => (
        <MenuCell key={t} $w={72}>{t}</MenuCell>
      ))}
      <Alert $ml={252} $size={19.5}>交易未登录</Alert>
      <Alert $ml={21} $size={19}>宝胜股份</Alert>
      <RightMenus>
        {['功能','版面','公式','选项','帮助'].map((t) => (
          <MenuCell key={t} $w={57}>{t}</MenuCell>
        ))}
        <Clock>07:47:32<ClockDay>周三</ClockDay></Clock>
        <WinButtons>
          <WinBtn><svg width={12} height={20} viewBox="0 0 12 20"><path d="M9 2L3 10l6 8" fill="none" stroke="#333" strokeWidth={2.4} /></svg></WinBtn>
          <WinBtn><svg width={14} height={14} viewBox="0 0 14 14"><path d="M1 7h12" stroke="#333" strokeWidth={3} /></svg></WinBtn>
          <WinBtn><svg width={18} height={18} viewBox="0 0 18 18"><path d="M6 5V2h10v10h-3" fill="none" stroke="#333" strokeWidth={2.2} /><rect x={2} y={5} width={11} height={11} fill="none" stroke="#333" strokeWidth={2.6} /></svg></WinBtn>
          <WinBtn><svg width={16} height={18} viewBox="0 0 16 18"><path d="M2 1l12 16M14 1L2 17" stroke="#333" strokeWidth={2.2} /></svg></WinBtn>
        </WinButtons>
      </RightMenus>
    </TitleBar>

    <Body>
      <LeftCol>
        <Toolbar>
          <ToolIconCell>
            <svg width={18} height={20} viewBox="0 0 18 20"><rect x={1} y={1} width={16} height={18} rx={3} fill="none" stroke="#9a9a9a" strokeWidth={2} /><rect x={9} y={4} width={5} height={12} fill="#b8b8b8" /></svg>
          </ToolIconCell>
          <PeriodList>
            {periods.map((p) => (
              <Period key={p} $on={p === '日线'}>{p}</Period>
            ))}
          </PeriodList>
          <ActionList>
            {actions.map(([t, w]) => (
              <Action key={t} $w={w}>{t}</Action>
            ))}
          </ActionList>
        </Toolbar>

        <MainPane>
          <MainChart />
          <Legend $top={3}>
            宝胜股份(日线)
            <ChevronDot $ml={9} $mr={4} width={18} height={18} viewBox="0 0 18 18">
              <circle cx={9} cy={9} r={8} fill="#8a8a8a" />
              <path d="M5 7l4 4 4-4" fill="none" stroke="#222" strokeWidth={2} />
            </ChevronDot>
            变色双通道主
            <LegendTxt $ml={9}>MA120: 4.96</LegendTxt>
            <LegendTxt $c="#ffff00" $ml={8}>年线: 5.01</LegendTxt>
            <LegendTxt $c="#00c000" $ml={10}>短波: 5.03</LegendTxt>
            <LegendTxt $c="#ff0000" $ml={8}>中波: 4.96</LegendTxt>
            <LegendTxt $c="#00ff00" $ml={9}>HZ2: 5.00</LegendTxt>
            <LegendTxt $c="#ff00ff" $ml={8}>HZ4: 4.95</LegendTxt>
          </Legend>
          <PaneIcons>
            <svg width={16} height={18} viewBox="0 0 16 18"><path d="M8 1l7 8-7 8-7-8z" fill="none" stroke="#8a8a8a" strokeWidth={1.4} /></svg>
            <svg width={17} height={18} viewBox="0 0 17 18"><rect x={1} y={1} width={15} height={16} rx={2} fill="none" stroke="#9a9a9a" strokeWidth={1.8} /><rect x={9} y={4} width={4} height={10} fill="#b8b8b8" /></svg>
          </PaneIcons>
        </MainPane>

        <VolPane>
          <VolumeChart />
          <Legend $top={1}>
            <ChevronDot $ml={0} $mr={5} width={18} height={18} viewBox="0 0 18 18">
              <circle cx={9} cy={9} r={8} fill="#8a8a8a" />
              <path d="M5 7l4 4 4-4" fill="none" stroke="#222" strokeWidth={2} />
            </ChevronDot>
            VOLUME: 252811.52
            <LegendTxt $ml={8}>MA5: 285630.25</LegendTxt>
            <LegendTxt $c="#ffff00" $ml={8}>MA10: 217755.81</LegendTxt>
          </Legend>
        </VolPane>

        <TimeAxis>
          <TimeSeg $w={114} $first>2023年</TimeSeg>
          <TimeSeg $w={249}>5</TimeSeg>
          <TimeSeg $w={245}>6</TimeSeg>
          <TimeSeg $w={171}>7</TimeSeg>
          <TimeSeg $w={116} $bg="#000080" $c="#b8c0e0">2023/07/21/五</TimeSeg>
          <TimeSeg $w={254} $first />
          <TimeSeg $w={246}>9</TimeSeg>
          <TimeSeg $w={244}>10</TimeSeg>
          <TimeSeg $w={75} $c={GRAY} $center>日线</TimeSeg>
          <Ticks width={1714} height={6} viewBox="0 0 1714 6">
            {[175, 239, 300, 423, 485, 546, 672, 737, 960, 1020, 1085, 1210, 1272, 1334, 1458, 1520, 1582].map((x) => (
              <line key={x} x1={x} x2={x} y1={0} y2={4} stroke="#b00000" strokeWidth={1.2} />
            ))}
          </Ticks>
        </TimeAxis>

        <TabRow $h={26}>
          {tabs1.map(([t, w, c]) => (
            <Tab key={t} $w={w} $c={c}>{t}</Tab>
          ))}
          <TabGap $w={642} />
          <Tab $w={53}>模版</Tab>
          <Tab $w={27}>+</Tab>
        </TabRow>
        <TabRow $h={28}>
          {tabs2.map(([t, w, c]) => (
            <Tab key={t} $w={w} $c={c}>{t}</Tab>
          ))}
        </TabRow>
      </LeftCol>

      <RightCol>
        <Section $h={85}>
          <NameRow>
            <StockName>宝胜股份</StockName>
            <StockCode>600973</StockCode>
            <RBadge>R</RBadge>
          </NameRow>
          <QuoteRow>
            <span>5.10</span>
            <QuoteChange><QuoteTri />-0.05</QuoteChange>
            <QuoteChange>-0.97%</QuoteChange>
          </QuoteRow>
        </Section>
        <Section $h={135} $pt={2} $line={false}>
          {sell.map(([a, b, c]) => (
            <QRow key={a}>
              <Cell $big $left>{a}</Cell>
              <Cell $c={GREEN}>{b}</Cell>
              <Cell $c={YEL}>{c}</Cell>
            </QRow>
          ))}
        </Section>
        <MidRule />
        <Section $h={139} $pt={3}>
          {buy.map(([a, b, c]) => (
            <QRow key={a}>
              <Cell $big $left>{a}</Cell>
              <Cell $c={GREEN}>{b}</Cell>
              <Cell $c={YEL}>{c}</Cell>
            </QRow>
          ))}
        </Section>
        <Section $h={146} $pt={2}>
          {stats.map(([a, b, bc, c, d, dc]) => (
            <SRow key={a}>
              <Cell $big $left>{a}</Cell>
              <Cell $c={bc}>{b}</Cell>
              <Cell $big $left $pl={8}>{c}</Cell>
              <Cell $c={dc}>{splitYi(d)}</Cell>
            </SRow>
          ))}
        </Section>
        <Section $h={92} $pt={2}>
          {stats2.map(([a, b, c, d]) => (
            <SRow key={a}>
              <Cell $big $left $ls={a.includes('(') ? -2.2 : 0}>{a}</Cell>
              <Cell>{b}</Cell>
              <Cell $big $left $pl={8} $ls={c.includes('(') ? -1 : 0}>{c}</Cell>
              <Cell>{splitYi(d)}</Cell>
            </SRow>
          ))}
        </Section>
        <Section $h={120} $pt={3}>
          {flows.map(([a, w, c, v, p]) => (
            <FRow key={a}>
              <Cell $big $left>{a}</Cell>
              <FlowBarWrap><FlowBar $c={c} $w={w} /></FlowBarWrap>
              <Cell $c={c}>{v}<Wan>万</Wan></Cell>
              <Cell $c={c}>{p}</Cell>
            </FRow>
          ))}
        </Section>
        <TradeList>
          {trades.map((r, i) => (
            <TRow key={i}>
              <Cell $left>{r[0]}</Cell>
              <Cell $c={GREEN}>{r[1]}</Cell>
              <Cell $c={r[3] === '-' ? MAG : YEL}>{r[2]}</Cell>
              <Cell $center $c={r[3] === 'B' ? RED : GREEN}>{r[3] === '-' ? '' : r[3]}</Cell>
              <Cell>{r[4]}</Cell>
            </TRow>
          ))}
        </TradeList>
      </RightCol>

      <SideBar>
        {sideIcons.map((n, i) => (
          <SideCell key={i}>{n}</SideCell>
        ))}
        <SideRule />
        {sideIcons2.map((n, i) => (
          <SideCell key={i}>{n}</SideCell>
        ))}
        <SideRule />
        {sideIcons3.map((n, i) => (
          <SideCell key={i}>{n}</SideCell>
        ))}
        {sideLabels.map((t) => (
          <SideCell key={t} $on={t === '日'}>{t}</SideCell>
        ))}
      </SideBar>
    </Body>

    <StatusBar>
      <svg width={24} height={24} viewBox="0 0 24 24" style={{ flex: 'none' }}>
        <rect x={1} y={1} width={21} height={22} rx={3} fill="#f0b040" stroke="#c88020" />
        <rect x={6} y={6} width={11} height={12} fill="#ffe8a0" stroke="#d09030" />
      </svg>
      {statusItems.map(([t, w, k], i) => (
        <StatusItem key={i} $w={w} $kind={k}>
          {t.endsWith('亿') ? <>{t.slice(0, -1)}<Yi>亿</Yi></> : t}
        </StatusItem>
      ))}
      <StatusSep />
      <Blocks>
        <BlockRow>
          {['#fff', '#fff', '#f00000', '#008a00', '#fff', '#fff', '#fff'].map((c, i) => (
            <Block key={i} $c={c} $w={i === 3 ? 16 : 12} $h={7} />
          ))}
        </BlockRow>
        <BlockRow>
          {Array.from({ length: 9 }).map((_, i) => (
            <Block key={i} $c="#0a8a0a" $w={9} $h={3} />
          ))}
        </BlockRow>
        <BlockRow>
          {Array.from({ length: 9 }).map((_, i) => (
            <Block key={i} $c="#0a8a0a" $w={9} $h={3} />
          ))}
        </BlockRow>
      </Blocks>
    </StatusBar>

    <Watermark>
      <WmTitle>公式指标网</WmTitle>
      <WmLogo width={78} height={79} viewBox="0 0 78 79">
        <path d="M5 40A34 34 0 0 1 73 40" fill="none" stroke="#d0644e" strokeWidth={8} />
        <path d="M73 42A34 34 0 0 1 39 76" fill="none" stroke="#e8c84a" strokeWidth={8} />
        <path d="M5 42A34 34 0 0 0 39 76" fill="none" stroke="#e8c84a" strokeWidth={2} strokeDasharray="3 2" />
        <circle cx={39} cy={6} r={4} fill="none" stroke="#e8c84a" strokeWidth={2.5} />
        <rect x={24} y={11} width={30} height={66} fill="#e8c84a" />
        <path d="M28 24h22M39 11v16M26 38h26M30 30v14M48 30v14M26 52h26M39 40v12M30 58h18M30 58v14M48 58v14" stroke="#80aad9" strokeWidth={2.4} />
      </WmLogo>
      <WmUrl>www.9m8.cn</WmUrl>
    </Watermark>
  </Page>
);

export default App;
